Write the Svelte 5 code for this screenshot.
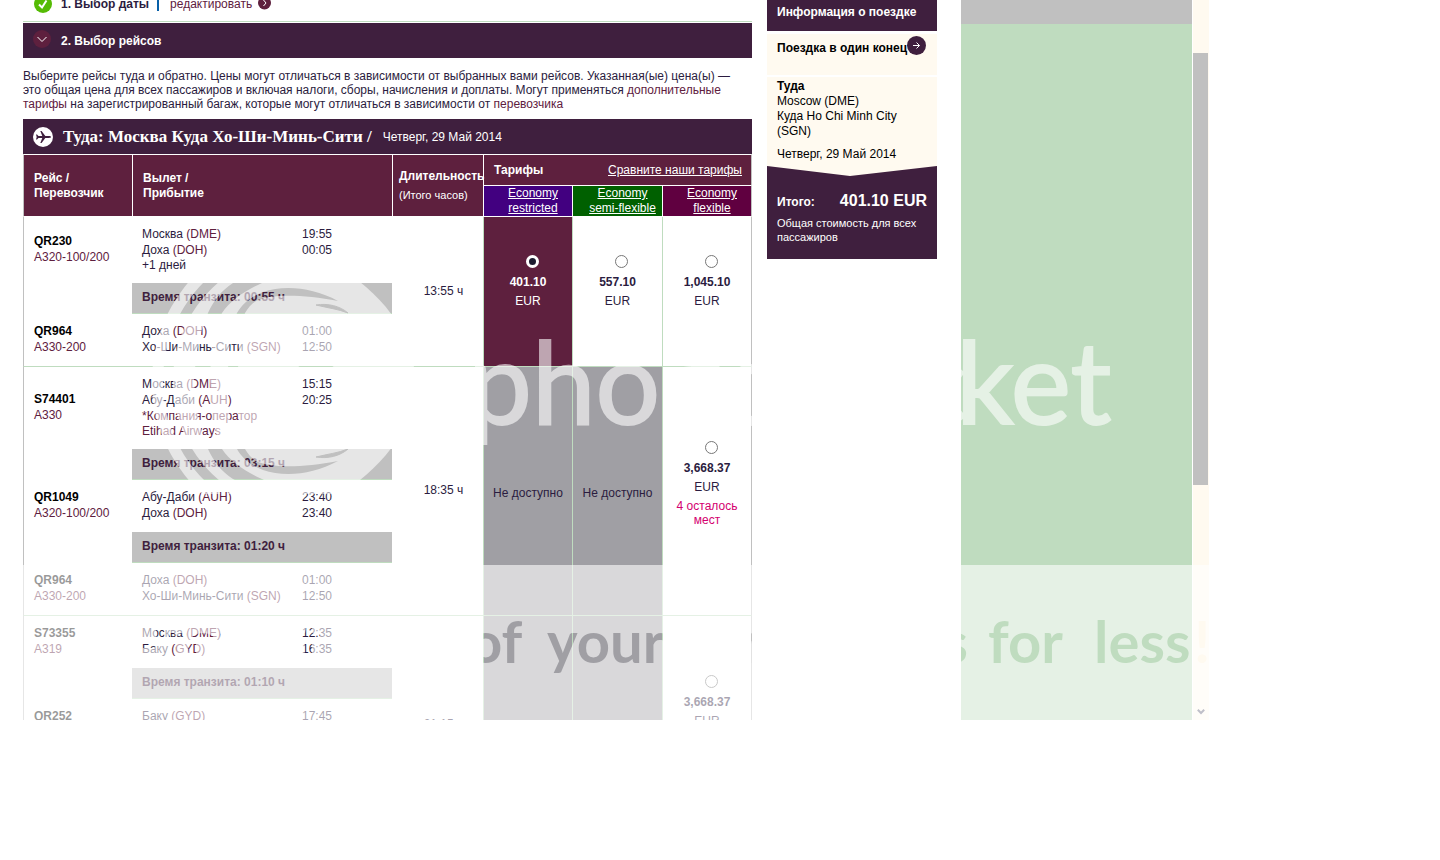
<script>
  let selected = $state('0-0');

  const groups = [
    {
      duration: '13:55 ч',
      legs: [
        { no: 'QR230', craft: 'A320-100/200', stops: [['Москва', 'DME', '19:55'], ['Доха', 'DOH', '00:05']], extra: '+1 дней' },
        { transit: '00:55 ч' },
        { no: 'QR964', craft: 'A330-200', stops: [['Доха', 'DOH', '01:00'], ['Хо-Ши-Минь-Сити', 'SGN', '12:50']] }
      ],
      fares: [{ price: '401.10' }, { price: '557.10' }, { price: '1,045.10' }]
    },
    {
      duration: '18:35 ч',
      legs: [
        { no: 'S74401', craft: 'A330', stops: [['Москва', 'DME', '15:15'], ['Абу-Даби', 'AUH', '20:25']], operator: '*Компания-оператор', extra: 'Etihad Airways' },
        { transit: '03:15 ч' },
        { no: 'QR1049', craft: 'A320-100/200', stops: [['Абу-Даби', 'AUH', '23:40'], ['Доха', 'DOH', '23:40']] },
        { transit: '01:20 ч' },
        { no: 'QR964', craft: 'A330-200', stops: [['Доха', 'DOH', '01:00'], ['Хо-Ши-Минь-Сити', 'SGN', '12:50']] }
      ],
      fares: [null, null, { price: '3,668.37', left: '4 осталось мест' }]
    },
    {
      duration: '21:15 ч',
      legs: [
        { no: 'S73355', craft: 'A319', stops: [['Москва', 'DME', '12:35'], ['Баку', 'GYD', '16:35']] },
        { transit: '01:10 ч' },
        { no: 'QR252', craft: 'A320', stops: [['Баку', 'GYD', '17:45'], ['Доха', 'DOH', '19:25']] },
        { transit: '05:35 ч' },
        { no: 'QR964', craft: 'A330-200', stops: [['Доха', 'DOH', '01:00'], ['Хо-Ши-Минь-Сити', 'SGN', '12:50']] }
      ],
      fares: [null, null, { price: '3,668.37', left: '4 осталось мест' }]
    }
  ];
</script>

<div class="viewport">
  <main>
    <div class="step">
      <svg class="check" width="18" height="18" viewBox="0 0 18 18" aria-hidden="true">
        <circle cx="9" cy="9" r="9" fill="#55bb05" />
        <path d="M5 9.5 8 12.5 12.5 5.5" fill="none" stroke="#fff" stroke-width="2" />
      </svg>
      <strong>1. Выбор даты</strong>
      <span class="bar"></span>
      <a href="#dates">редактировать</a>
      <svg class="go" width="13" height="13" viewBox="0 0 13 13" aria-hidden="true">
        <circle cx="6.5" cy="6" r="6.5" fill="#5e203e" />
        <path d="M5.5 3 8 6 5.5 9" fill="none" stroke="#fff" />
      </svg>
    </div>

    <h2>
      <svg width="18" height="18" viewBox="0 0 18 18" aria-hidden="true">
        <circle cx="9" cy="7" r="9" fill="#5e203e" />
        <path d="M4.5 5 9 9.5 13.5 5" fill="none" stroke="#fff" />
      </svg>
      2. Выбор рейсов
    </h2>

    <p class="intro">
      Выберите рейсы туда и обратно. Цены могут отличаться в зависимости от выбранных вами рейсов. Указанная(ые) цена(ы) — это общая цена для всех пассажиров и включая налоги, сборы, начисления и доплаты. Могут применяться <a href="#baggage">дополнительные тарифы</a> на зарегистрированный багаж, которые могут отличаться в зависимости от <a href="#carrier">перевозчика</a>
    </p>

    <h3>
      <svg width="20" height="20" viewBox="0 0 20 20" aria-hidden="true">
        <circle cx="10" cy="10" r="10" fill="#fff" />
        <path d="M18 10c0-.6-.9-.9-2-.9h-3.700L8.600 4H7.300L9.300 9.100H5.500L4 7.500H3L3.700 10 3 12.500H4l1.500-1.600h3.800L7.300 16H8.600l3.700-5.100H16c1.100 0 2-.3 2-.9z" fill="#3f1f3e" />
      </svg>
      <span class="route">Туда: Москва Куда Хо-Ши-Минь-Сити /</span>
      <span class="date">Четверг, 29 Май 2014</span>
    </h3>

    <table>
      <colgroup>
        <col class="c1" /><col class="c2" /><col class="c3" /><col class="c4" /><col class="c5" /><col class="c6" />
      </colgroup>
      <thead>
        <tr>
          <th rowspan="2">Рейс /<br />Перевозчик</th>
          <th rowspan="2">Вылет /<br />Прибытие</th>
          <th rowspan="2" class="length">Длительность<small>(Итого часов)</small></th>
          <th colspan="3">
            <div class="fares">Тарифы <a href="#compare">Сравните наши тарифы</a></div>
          </th>
        </tr>
        <tr>
          <th class="fare restricted"><a href="#restricted">Economy<br />restricted</a></th>
          <th class="fare semi"><a href="#semi">Economy<br />semi-flexible</a></th>
          <th class="fare flexible"><a href="#flexible">Economy<br />flexible</a></th>
        </tr>
      </thead>
      {#each groups as group, g}
        <tbody>
          {#each group.legs as leg, i}
            <tr class:last={i === group.legs.length - 1}>
              <td class="flight">
                {#if leg.no}<strong>{leg.no}</strong><a href="#aircraft">{leg.craft}</a>{/if}
              </td>
              {#if leg.transit}
                <td class="transit">Время транзита: {leg.transit}</td>
              {:else}
                <td class="stops">
                  {#each leg.stops as [city, code, time]}
                    <div class="stop"><span>{city} <a href="#airport">({code})</a></span><span>{time}</span></div>
                  {/each}
                  {#if leg.operator}<div class="operator">{leg.operator}</div>{/if}
                  {#if leg.extra}<div class="extra" class:operator={leg.operator}>{leg.extra}</div>{/if}
                </td>
              {/if}
              {#if i === 0}
                <td class="duration" rowspan={group.legs.length}>{group.duration}</td>
                {#each group.fares as fare, f}
                  {#if fare}
                    <td class="price" class:selected={selected === `${g}-${f}`} rowspan={group.legs.length}>
                      <label>
                        <input type="radio" name="fare" value={`${g}-${f}`} bind:group={selected} />
                        <strong>{fare.price}</strong>
                        <span>EUR</span>
                        {#if fare.left}<em>{fare.left}</em>{/if}
                      </label>
                    </td>
                  {:else}
                    <td class="none" rowspan={group.legs.length}>Не доступно</td>
                  {/if}
                {/each}
              {/if}
            </tr>
          {/each}
        </tbody>
      {/each}
    </table>
  </main>

  <aside>
    <h4>Информация о поездке</h4>
    <div class="trip">
      <strong>Поездка в один конец</strong>
      <svg width="19" height="19" viewBox="0 0 19 19" aria-hidden="true">
        <circle cx="9.5" cy="9.5" r="9.500" fill="#3f1f3e" />
        <path d="M6 9.500H12.500M9.500 6.500 12.500 9.500 9.500 12.500" fill="none" stroke="#fff" />
      </svg>
    </div>
    <div class="details">
      <strong>Туда</strong>
      <div>Moscow (DME)</div>
      <div>Куда Ho Chi Minh City (SGN)</div>
      <div class="when">Четверг, 29 Май 2014</div>
    </div>
    <svg class="notch" width="170" height="10" viewBox="0 0 170 10" preserveAspectRatio="none" aria-hidden="true">
      <path d="M0 0 83 10 170 0V10H0z" fill="#3f1f3e" />
    </svg>
    <div class="total">
      <div class="sum"><strong>Итого:</strong><b>401.10 EUR</b></div>
      <p>Общая стоимость для всех пассажиров</p>
    </div>
  </aside>

  <div class="backdrop"></div>
  <div class="scroll">
    <div class="thumb"></div>
    <svg width="8" height="6" viewBox="0 0 8 6" aria-hidden="true"><path d="M.8.8 4 4 7.200.8" fill="none" stroke="#606078" stroke-width="2" /></svg>
  </div>

  <svg class="watermark" width="1209" height="720" viewBox="0 0 1209 720" aria-hidden="true">
    <defs>
      <g id="curls" fill="#000">
        <path d="M168 381A134 134 0 0 1 228 269" fill="none" stroke="#000" stroke-width="10" />
        <path d="M194 381C196 350 201 328 208 313C214 300 221 291 233 283L246 276H276L262 283C244 291 230 301 222 313C214 330 211 350 210 381Z" />
        <path d="M228 381C228 350 230 328 237 313C242 304 250 297 263 292C284 285 312 287 338 301C302 294 270 294 256 301C251 304 248 308 245 313C240 328 238 350 238 381Z" />
        <path d="M316 305C328 303 340 306 348 313C338 309 328 308 316 305Z" stroke="#000" />
      </g>
      <mask id="mark" maskUnits="userSpaceOnUse" x="0" y="0" width="1209" height="720">
        <path d="M152 381C152 340 168 300 202 268H340C376 290 415 330 415 381S376 472 340 494H202C168 462 152 422 152 381Z" fill="#fff" />
        <use href="#curls" />
        <use href="#curls" transform="matrix(1 0 0 -1 0 762)" />
        <ellipse cx="316" cy="386" rx="26" ry="26" fill="#000" />
        <g class="word">
          <text x="468" y="424">pho</text>
          <text x="680" y="424">tobuc</text>
          <text x="956" y="424">ket</text>
        </g>
        <rect x="0" y="565" width="1209" height="155" fill="#fff" />
        <g class="tag">
          <text x="130" y="663">Protect</text>
          <text x="330" y="663">more</text>
          <text x="469" y="663">of</text>
          <text x="547" y="663">your</text>
          <text x="968" y="663" text-anchor="end">memories</text>
          <text x="988" y="663">for</text>
          <text x="1094" y="663">less</text>
          <text x="1194" y="663">!</text>
        </g>
      </mask>
    </defs>
    <rect width="1209" height="720" fill="#fff" fill-opacity=".6" mask="url(#mark)" />
  </svg>
</div>

<style>
  :global(body) { margin: 0; background: #fff; }
  .viewport {
    position: relative;
    display: flex;
    box-sizing: border-box;
    max-width: 1209px;
    height: calc(100vh - 140px);
    padding-left: 23px;
    overflow: hidden;
    font: 12px/14px "Liberation Sans", Arial, sans-serif;
    color: #2b1c40;
  }
  main { flex: 0 0 729px; }
  a { color: #5e203e; text-decoration: none; }
  h2, h3, h4, p { margin: 0; font-size: 12px; }

  .step {
    display: flex;
    align-items: center;
    height: 7px;
    padding: 0 0 14px 11px;
    border-bottom: 1px solid #bfdcbf;
    margin-bottom: 1px;
  }
  .step svg, h2 svg { overflow: visible; }
  .step .check { margin-right: 9px; }
  .step .bar { width: 2px; height: 14px; margin: 0 11px 0 8px; background: #0860a8; }
  .step .go { margin-left: 6px; }

  h2 {
    display: flex;
    align-items: center;
    gap: 10px;
    height: 35px;
    padding-left: 10px;
    background: #3f1f3e;
    color: #fff;
  }
  .intro { padding: 11px 8px 8px 0; }

  h3 {
    display: flex;
    align-items: center;
    height: 35px;
    padding-left: 10px;
    background: #3f1f3e;
    color: #fff;
    white-space: nowrap;
  }
  .route { margin: 0 11px 0 10px; font: bold 17px/20px "Liberation Serif", serif; }
  .date { font-weight: normal; }

  table { width: 100%; table-layout: fixed; border-collapse: separate; border-spacing: 0; }
  .c1 { width: 109px; }
  .c2 { width: 260px; }
  .c3 { width: 91px; }
  .c4 { width: 89px; }
  .c5, .c6 { width: 90px; }
  th, td { padding: 0; box-sizing: border-box; }
  th {
    height: 31px;
    padding-left: 10px;
    border-top: 1px solid #fff;
    border-left: 1px solid #fff;
    background: #5e203e;
    color: #fff;
    line-height: 15px;
    text-align: left;
  }
  th a { color: #fff; font-weight: normal; text-decoration: underline; }
  tr:first-child th:first-child { border-left-color: #c0c0c0; }
  th[rowspan], .fare { border-bottom: 1px solid #fff; }
  .fare { height: 32px; text-align: center; }
  .restricted { background: #420080; }
  .semi { background: #006000; }
  .flexible { background: #600040; }
  .fare.flexible, th[colspan] { border-right: 1px solid #c0c0c0; }
  .length { padding-left: 6px; white-space: nowrap; }
  small { display: block; margin-top: 4px; font-size: 11px; font-weight: normal; }
  .fares { display: flex; justify-content: space-between; padding-right: 9px; }

  .flight { padding: 0 0 2px 10px; border-left: 1px solid #c0c0c0; line-height: 16px; vertical-align: middle; }
  .flight strong, .flight a { display: block; }
  .flight strong { color: #000; }
  .stops { padding: 9px 0 11px 10px; line-height: 16px; }
  .stop { display: grid; grid-template-columns: 160px 1fr; }
  .extra { line-height: 14px; }
  .operator { color: #5e203e; }
  .transit { height: 31px; padding: 0 0 2px 10px; border-bottom: 1px solid #bfdcbf; background: #c0c0c0; color: #3f1f3e; font-weight: bold; }
  .last td, td[rowspan] { border-bottom: 1px solid #bfdcbf; }
  .duration { padding: 0 0 2px 12px; text-align: center; }
  .price, .none { border-left: 1px solid #bfdcbf; text-align: center; }
  .none { background: #a09fa4; padding-top: 3px; }
  td:last-child[rowspan] { border-right: 1px solid #c0c0c0; }
  .selected { background: #5e203e; color: #fff; }
  label { display: block; padding-bottom: 19px; line-height: 16px; }
  label strong, label span, label em { display: block; }
  label strong { margin: 6px 0 3px; }
  label em { width: 70px; margin: 4px auto -4px; color: #d4006f; font-style: normal; line-height: 14px; }
  input {
    display: block;
    appearance: none;
    box-sizing: border-box;
    width: 13px;
    height: 13px;
    margin: 0 auto;
    border: 1px solid #777;
    border-radius: 50%;
    background: #fff;
    position: relative;
    left: 4px;
  }
  input:checked { border: 3px solid #fff; background: #1c1c30; }

  aside { flex: 0 0 170px; margin-left: 15px; color: #000; }
  h4 { padding: 5px 10px 12px; background: #3f1f3e; color: #fff; }
  .trip {
    display: flex;
    align-items: flex-start;
    height: 34px;
    margin: 3px 0 2px;
    padding: 2px 0 5px 10px;
    background: #fffaf0;
    white-space: nowrap;
  }
  .trip strong { padding-top: 5px; }
  .details { padding: 2px 10px 4px; background: #fffaf0; line-height: 15px; }
  .when { margin-top: 8px; }
  .notch { display: block; width: 100%; background: #fffaf0; }
  .total { padding: 15px 10px; background: #3f1f3e; color: #fff; }
  .sum { display: flex; align-items: baseline; justify-content: space-between; line-height: 20px; }
  .sum b { font-size: 16px; }
  .total p { margin-top: 4px; font-size: 11px; }

  .backdrop { flex: 1; margin-left: 24px; border-top: 24px solid #c0c0c0; background: #bfdcbf; }
  .scroll {
    display: flex;
    flex: 0 0 16px;
    flex-direction: column;
    justify-content: space-between;
    align-items: center;
    margin-left: 1px;
    padding: 53px 0 5px;
    background: #fffaf0;
    box-sizing: border-box;
  }
  .thumb { width: 15px; height: 65.300%; align-self: flex-start; background: #c0c0c0; }

  .watermark { position: absolute; top: 0; left: 0; pointer-events: none; }
  .word { fill: #fff; stroke: #fff; stroke-width: 2px; font: 114px Lato, sans-serif; }
  .tag { fill: #000; font: bold 58px Lato, sans-serif; }
</style>
